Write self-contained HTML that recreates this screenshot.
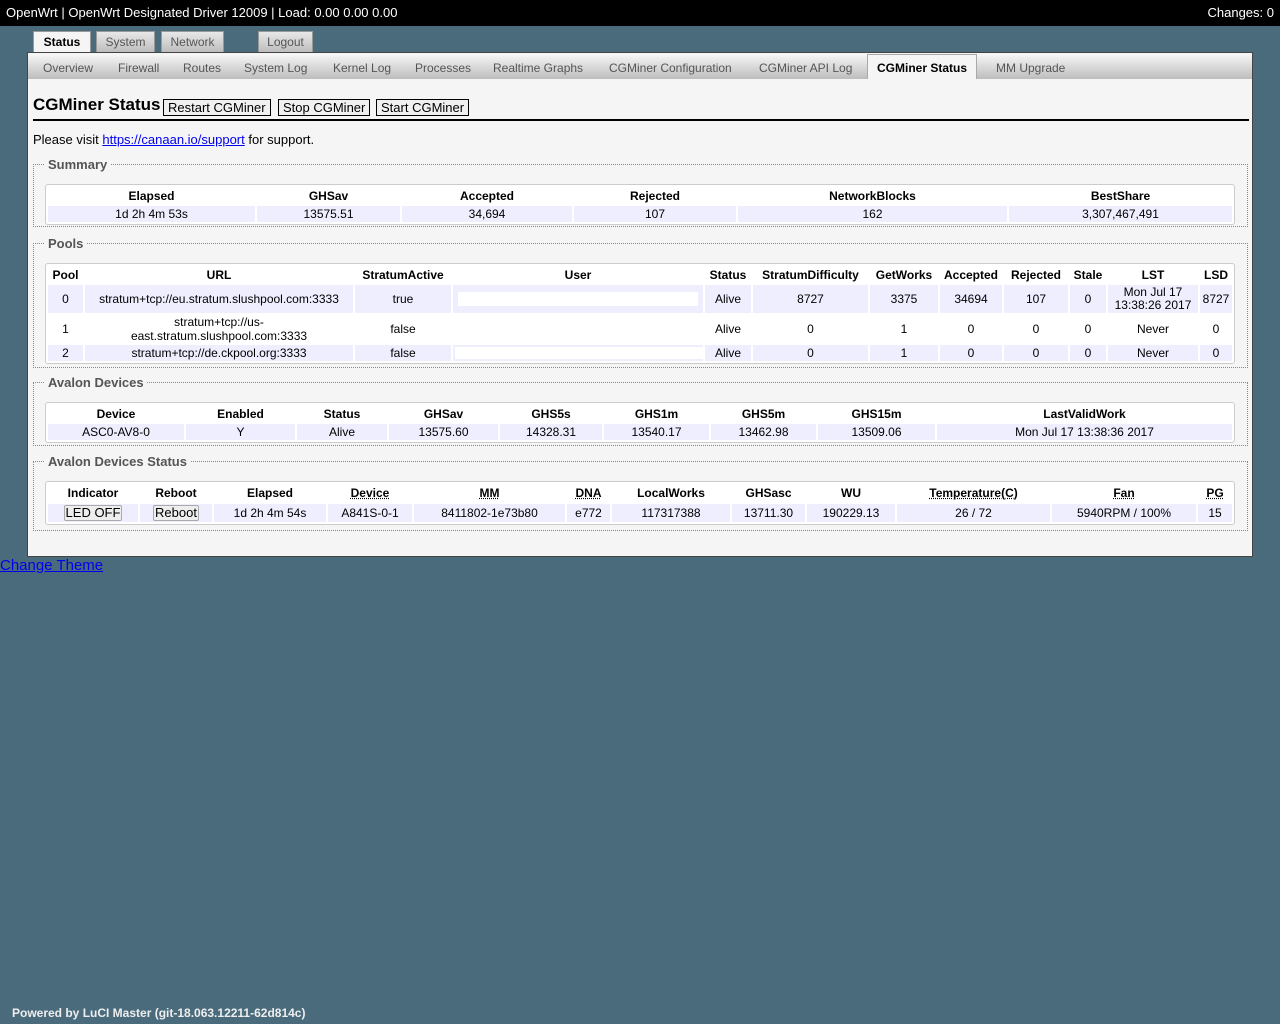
<!DOCTYPE html>
<html><head><meta charset="utf-8"><style>
*{box-sizing:border-box}
body{margin:0;width:1280px;height:1024px;background:#4a6b7c;font-family:"Liberation Sans","DejaVu Sans",sans-serif;font-size:12px;color:#000;position:relative;overflow:hidden}
.top{position:absolute;left:0;top:0;width:1280px;height:26px;background:#000;color:#fff;font-size:13px;line-height:26px;padding:0 6px}
.top span{float:right}
.tab{position:absolute;top:31px;height:22px;border:1px solid #999;border-bottom:none;background:linear-gradient(#e8e8e8,#bbb);color:#555;font-size:12px;text-align:center;line-height:20px}
.tab.act{background:#f5f5f5;color:#000;font-weight:bold;height:23px}
.main{position:absolute;left:27px;top:52px;width:1226px;height:505px;background:#f5f5f5;border:1px solid #444}
.sub{position:absolute;left:0;top:3px;width:1224px;height:23px;background:linear-gradient(#f2f2f2,#bdbdbd);}
.sub span{position:absolute;top:5px;color:#555}
.sub .act{top:-2px;height:25px;background:#f5f5f5;border:1px solid #aaa;border-bottom:none;color:#000;font-weight:bold;padding:6px 9px 0}
h2{position:absolute;left:5px;top:42px;margin:0;font-size:17px;font-weight:bold}
.btn{position:absolute;top:46px;height:17px;border:1px solid #000;background:#f0f0f0;font-size:13px;line-height:15px;padding:0 4px}
.hr{position:absolute;left:5px;top:66px;width:1216px;height:2px;background:#000}
.visit{position:absolute;left:5px;top:79px;font-size:13px}
a{color:#00e;text-decoration:underline}
fieldset{position:absolute;left:5px;width:1215px;border:1px dotted #888;margin:0;padding:0}
legend{font-weight:bold;color:#555;font-size:13px;padding:0 3px;margin-left:11px}
table{position:absolute;left:11px;width:1190px;border:1px solid #ccc;border-radius:3px;border-spacing:2px;table-layout:fixed;background:#fff}
td,th{text-align:center;padding:0;line-height:14px;font-size:12px;overflow:hidden;white-space:nowrap}
th{height:17px}
td{height:16px}
tr.d td{background:#eef}
u{text-decoration:underline dotted}
.inp{display:block;margin:0 5px;height:14px;background:#fff}
.sbtn{display:inline-block;border:1px solid #aaa;border-radius:2px;background:#eee;font-size:13px;padding:0 1px;line-height:14px}
</style></head><body>
<div class="top">OpenWrt | OpenWrt Designated Driver 12009 | Load: 0.00 0.00 0.00<span>Changes: 0</span></div>
<div class="tab act" style="left:33px;width:58px">Status</div>
<div class="tab" style="left:96px;width:59px">System</div>
<div class="tab" style="left:161px;width:63px">Network</div>
<div class="tab" style="left:258px;width:55px">Logout</div>
<div class="main">
 <div class="sub">
  <span style="left:15px">Overview</span><span style="left:90px">Firewall</span><span style="left:155px">Routes</span><span style="left:216px">System Log</span><span style="left:305px">Kernel Log</span><span style="left:387px">Processes</span><span style="left:465px">Realtime Graphs</span><span style="left:581px">CGMiner Configuration</span><span style="left:731px">CGMiner API Log</span>
  <span class="act" style="left:839px">CGMiner Status</span><span style="left:968px">MM Upgrade</span>
 </div>
 <h2>CGMiner Status</h2>
 <div class="btn" style="left:135px">Restart CGMiner</div>
 <div class="btn" style="left:250px">Stop CGMiner</div>
 <div class="btn" style="left:348px">Start CGMiner</div>
 <div class="hr"></div>
 <div class="visit">Please visit <a>https://canaan.io/support</a> for support.</div>

 <fieldset style="top:104px;height:70px"><legend>Summary</legend>
 <table style="top:12px"><colgroup><col style="width:207px"><col style="width:143px"><col style="width:170px"><col style="width:162px"><col style="width:269px"><col></colgroup>
 <tr><th>Elapsed</th><th>GHSav</th><th>Accepted</th><th>Rejected</th><th>NetworkBlocks</th><th>BestShare</th></tr>
 <tr class="d"><td>1d 2h 4m 53s</td><td>13575.51</td><td>34,694</td><td>107</td><td>162</td><td>3,307,467,491</td></tr></table></fieldset>

 <fieldset style="top:183px;height:132px"><legend>Pools</legend>
 <table style="top:12px"><colgroup><col style="width:35px"><col style="width:268px"><col style="width:96px"><col style="width:250px"><col style="width:46px"><col style="width:115px"><col style="width:68px"><col style="width:62px"><col style="width:64px"><col style="width:36px"><col style="width:90px"><col></colgroup>
 <tr><th>Pool</th><th>URL</th><th>StratumActive</th><th>User</th><th>Status</th><th>StratumDifficulty</th><th>GetWorks</th><th>Accepted</th><th>Rejected</th><th>Stale</th><th>LST</th><th>LSD</th></tr>
 <tr class="d" style="height:28px"><td>0</td><td>stratum+tcp://eu.stratum.slushpool.com:3333</td><td>true</td><td><span class="inp"></span></td><td>Alive</td><td>8727</td><td>3375</td><td>34694</td><td>107</td><td>0</td><td style="white-space:normal;line-height:13px">Mon Jul 17<br>13:38:26 2017</td><td>8727</td></tr>
 <tr style="height:28px"><td>1</td><td style="white-space:normal;line-height:14px">stratum+tcp://us-<br>east.stratum.slushpool.com:3333</td><td>false</td><td></td><td>Alive</td><td>0</td><td>1</td><td>0</td><td>0</td><td>0</td><td>Never</td><td>0</td></tr>
 <tr class="d"><td>2</td><td>stratum+tcp://de.ckpool.org:3333</td><td>false</td><td><span class="inp" style="margin:0 0 0 2px;height:12px"></span></td><td>Alive</td><td>0</td><td>1</td><td>0</td><td>0</td><td>0</td><td>Never</td><td>0</td></tr></table></fieldset>

 <fieldset style="top:322px;height:71px"><legend>Avalon Devices</legend>
 <table style="top:12px"><colgroup><col style="width:136px"><col style="width:109px"><col style="width:90px"><col style="width:109px"><col style="width:102px"><col style="width:105px"><col style="width:105px"><col style="width:117px"><col></colgroup>
 <tr><th>Device</th><th>Enabled</th><th>Status</th><th>GHSav</th><th>GHS5s</th><th>GHS1m</th><th>GHS5m</th><th>GHS15m</th><th>LastValidWork</th></tr>
 <tr class="d"><td>ASC0-AV8-0</td><td>Y</td><td>Alive</td><td>13575.60</td><td>14328.31</td><td>13540.17</td><td>13462.98</td><td>13509.06</td><td>Mon Jul 17 13:38:36 2017</td></tr></table></fieldset>

 <fieldset style="top:401px;height:77px"><legend>Avalon Devices Status</legend>
 <table style="top:12px"><colgroup><col style="width:90px"><col style="width:72px"><col style="width:112px"><col style="width:84px"><col style="width:151px"><col style="width:43px"><col style="width:118px"><col style="width:73px"><col style="width:88px"><col style="width:153px"><col style="width:144px"><col></colgroup>
 <tr><th style="height:18px">Indicator</th><th>Reboot</th><th>Elapsed</th><th><u>Device</u></th><th><u>MM</u></th><th><u>DNA</u></th><th>LocalWorks</th><th>GHSasc</th><th>WU</th><th><u>Temperature(C)</u></th><th><u>Fan</u></th><th><u>PG</u></th></tr>
 <tr class="d" style="height:18px"><td><span class="sbtn">LED OFF</span></td><td><span class="sbtn">Reboot</span></td><td>1d 2h 4m 54s</td><td>A841S-0-1</td><td>8411802-1e73b80</td><td>e772</td><td>117317388</td><td>13711.30</td><td>190229.13</td><td>26 / 72</td><td>5940RPM / 100%</td><td>15</td></tr></table></fieldset>
</div>
<a style="position:absolute;left:0;top:557px;font-size:15px">Change Theme</a>
<div style="position:absolute;left:12px;top:1006px;color:#eee;font-weight:bold;font-size:12px">Powered by LuCI Master (git-18.063.12211-62d814c)</div>
</body></html>
